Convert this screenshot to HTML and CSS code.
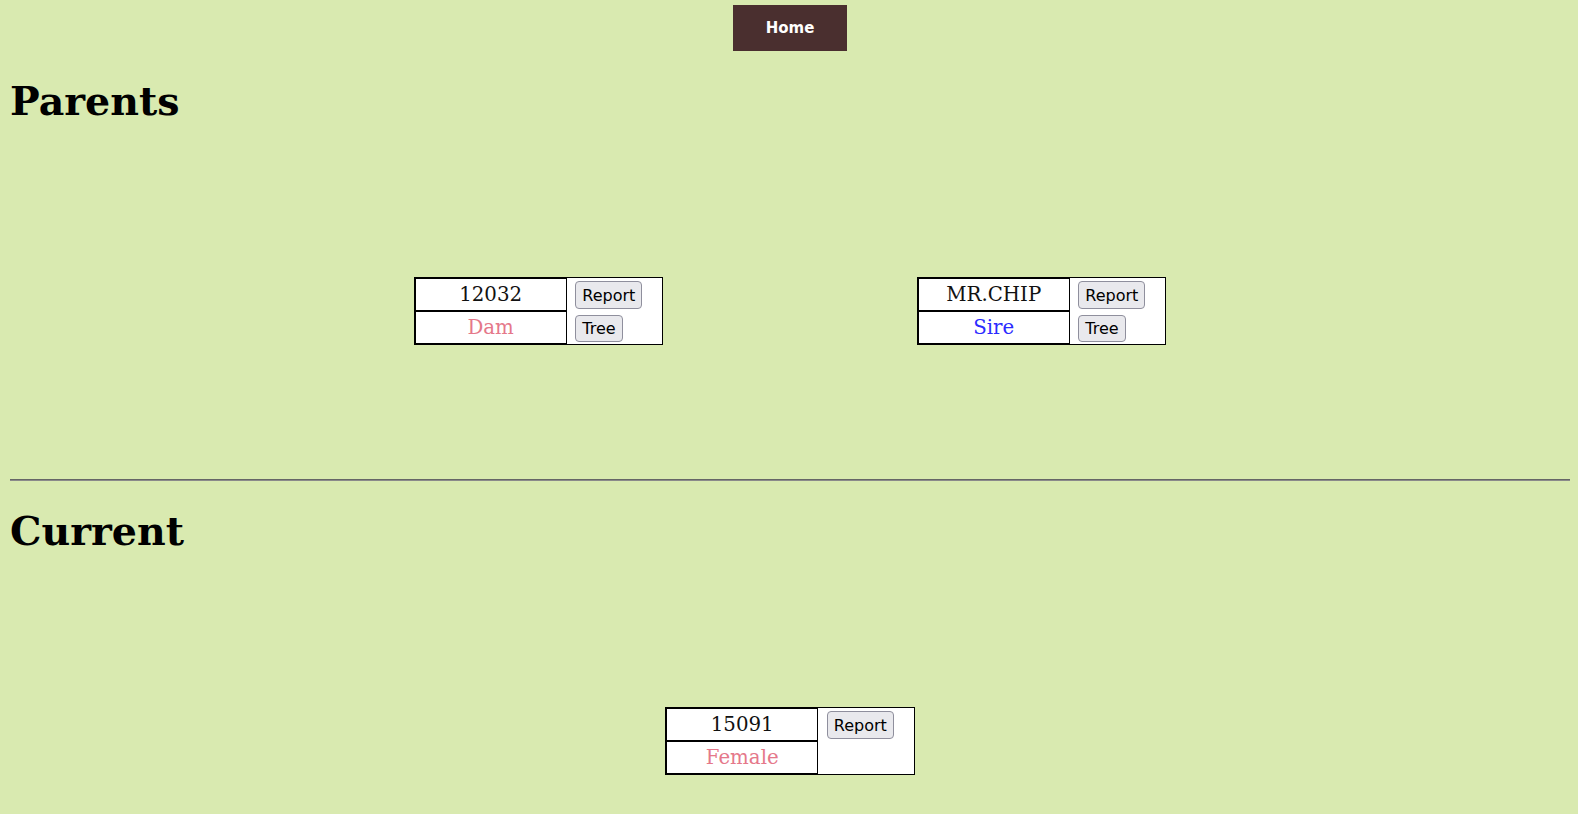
FILE: index.html
```html
<!DOCTYPE html>
<html>
<head>
<meta charset="utf-8">
<title>Pedigree</title>
<link rel="stylesheet" href="styles.css">
</head>
<body>
<nav class="topnav">
  <a class="home-btn" href="#">Home</a>
</nav>

<h1 class="section-title">Parents</h1>
<div class="stage stage-parents">
  <table class="animal">
    <tr>
      <td class="name">12032</td>
      <td class="actions" rowspan="2">
        <button class="btn">Report</button>
        <button class="btn">Tree</button>
      </td>
    </tr>
    <tr>
      <td class="name female">Dam</td>
    </tr>
  </table>

  <table class="animal">
    <tr>
      <td class="name">MR.CHIP</td>
      <td class="actions" rowspan="2">
        <button class="btn">Report</button>
        <button class="btn">Tree</button>
      </td>
    </tr>
    <tr>
      <td class="name male">Sire</td>
    </tr>
  </table>
</div>

<hr class="divider">

<h1 class="section-title">Current</h1>
<div class="stage">
  <table class="animal">
    <tr>
      <td class="name">15091</td>
      <td class="actions" rowspan="2">
        <button class="btn">Report</button>
      </td>
    </tr>
    <tr>
      <td class="name female">Female</td>
    </tr>
  </table>
</div>
</body>
</html>
```

FILE: styles.css
```css
html, body {
  background: #d9eab0;
}

body {
  margin: 0 8px 0 10px;
  font-family: "DejaVu Serif", serif;
  color: #000;
}

.topnav {
  display: flex;
  justify-content: center;
  padding-top: 5px;
}

.home-btn {
  display: flex;
  align-items: center;
  justify-content: center;
  width: 114px;
  height: 46px;
  background: #4a2f2f;
  color: #fff;
  font-family: "DejaVu Sans", sans-serif;
  font-weight: bold;
  font-size: 15px;
  text-decoration: none;
}

.section-title {
  font-family: "DejaVu Serif", serif;
  font-weight: bold;
  font-size: 39.5px;
  margin: 26.6px 0 23.5px;
  line-height: normal;
}

.stage {
  display: flex;
  justify-content: center;
  align-items: center;
  height: 327px;
}

.stage-parents {
  gap: 253.5px;
}

.animal {
  border: 1px solid #000;
  border-spacing: 0;
  background: #fff;
}

.name {
  width: 150px;
  height: 31px;
  padding: 0;
  border: 1px solid #000;
  text-align: center;
  font-size: 19.8px;
  color: #111;
}

.name.female {
  color: #e5788a;
}

.name.male {
  color: #2b2bff;
}

.actions {
  width: 87px;
  padding: 3.7px 0 0 8.6px;
  vertical-align: top;
}

.actions .btn {
  display: block;
}

.actions .btn + .btn {
  margin-top: 5.7px;
}

.btn {
  box-sizing: border-box;
  height: 27.6px;
  padding: 0 6px;
  background: #e9e9ed;
  border: 1px solid #8f8f9d;
  border-radius: 4px;
  font-family: "DejaVu Sans", sans-serif;
  font-size: 16px;
  color: #000;
}

.divider {
  border: 0;
  border-top: 1px solid #666;
  border-bottom: 1px solid #8a8a8a;
  height: 0;
  margin: 5px 0;
}
```
